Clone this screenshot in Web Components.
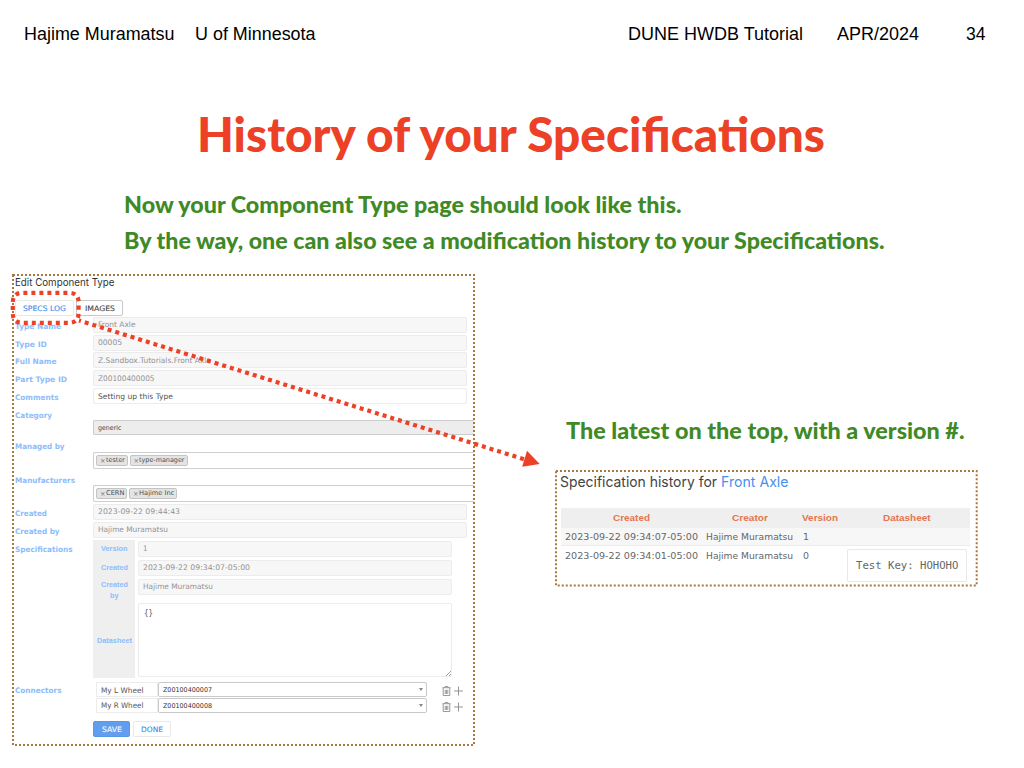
<!DOCTYPE html>
<html lang="en">
<head>
<meta charset="utf-8">
<title>History of your Specifications</title>
<style>
html,body{margin:0;width:1024px;height:768px;overflow:hidden;background:#fff}
</style>
</head>
<body>
<tutorial-slide></tutorial-slide>
<script>
const make = (host, html) => { host.attachShadow({mode:'open'}).innerHTML = html; };

/* One line of text set to a given measure. */
customElements.define('fit-text', class extends HTMLElement {
  connectedCallback() {
    if (this.shadowRoot) return;
    make(this, `<style>:host{display:block;flex:none;white-space:nowrap;line-height:1.2}
      span{display:inline-block;transform-origin:0 50%}</style><span><slot></slot></span>`);
    const w = parseFloat(this.getAttribute('w'));
    const s = this.shadowRoot.querySelector('span');
    const natural = s.getBoundingClientRect().width;
    this.style.width = w + 'px';
    if (natural) s.style.transform = `scaleX(${w / natural})`;
  }
});

customElements.define('dotted-frame', class extends HTMLElement {
  connectedCallback() {
    if (this.shadowRoot) return;
    make(this, `<style>:host{display:block;position:relative;box-sizing:border-box}
      svg{position:absolute;inset:0;width:100%;height:100%;overflow:visible;pointer-events:none}
      rect{fill:none;stroke:#aa7942;stroke-width:2;stroke-dasharray:2 2}</style>
      <slot></slot><svg><rect width="100%" height="100%"/></svg>`);
  }
});

customElements.define('slide-header', class extends HTMLElement {
  connectedCallback() {
    if (this.shadowRoot) return;
    make(this, `<style>:host{display:flex;height:68px;box-sizing:border-box;padding:24.4px 0 0 23.7px;font:17.5px "Liberation Sans",sans-serif;color:#000}
      .r{display:flex;margin:-.4px 0 0 313px}</style>
      <fit-text w="150.5">Hajime Muramatsu</fit-text><fit-text w="120.5" style="margin-left:20.5px">U of Minnesota</fit-text>
      <div class="r"><fit-text w="175">DUNE HWDB Tutorial</fit-text><fit-text w="82" style="margin-left:34px">APR/2024</fit-text><fit-text w="19.5" style="margin-left:46.8px">34</fit-text></div>`);
  }
});

/* Label on the left, control slotted on the right. */
customElements.define('form-row', class extends HTMLElement {
  connectedCallback() {
    if (this.shadowRoot) return;
    const h = this.getAttribute('h'), top = this.getAttribute('top') || 5;
    make(this, `<style>:host{display:grid;grid-template-columns:78.3px 1fr;height:${h}px}
      .l{padding-top:${top}px;font:bold 7.6px "DejaVu Sans",sans-serif;color:#8dbdfb}
      .c{padding-top:${this.getAttribute('ctop') || 0}px;min-width:0}</style>
      <div class="l"><fit-text w="${this.getAttribute('lw')}">${this.getAttribute('label')}</fit-text></div><div class="c"><slot></slot></div>`);
  }
});

customElements.define('text-field', class extends HTMLElement {
  connectedCallback() {
    if (this.shadowRoot) return;
    const on = this.hasAttribute('editable');
    make(this, `<style>:host{display:flex;align-items:center;box-sizing:border-box;width:${this.getAttribute('box') || 374}px;height:16px;border:1px solid #ececec;border-radius:2px;padding:0 0 0 4px;
      background:${on ? '#fff' : '#f7f7f7'};color:${on ? '#555' : '#929292'};font:7.6px "DejaVu Sans",sans-serif}</style>
      <fit-text w="${this.getAttribute('w')}"><slot></slot></fit-text>`);
  }
});

customElements.define('tag-select', class extends HTMLElement {
  connectedCallback() {
    if (this.shadowRoot) return;
    make(this, `<style>:host{display:flex;align-items:center;gap:2px;box-sizing:border-box;height:17px;border:1px solid #cfcfcf;border-right:0;border-radius:2px 0 0 2px;padding-left:2.2px}</style><slot></slot>`);
  }
});

customElements.define('tag-chip', class extends HTMLElement {
  connectedCallback() {
    if (this.shadowRoot) return;
    const b = parseFloat(this.getAttribute('box'));
    make(this, `<style>:host{display:flex;align-items:center;box-sizing:border-box;width:${b}px;height:11px;background:#e4e4e4;border:1px solid #c4c4c4;border-radius:2px;padding:1px 0 0 2.5px;gap:1.5px;font:6.6px "DejaVu Sans",sans-serif;color:#4c4c4c}
      i{font-style:normal;color:#777;width:4.5px;line-height:1}</style><i>×</i><fit-text w="${b - 12.5}"><slot></slot></fit-text>`);
  }
});

customElements.define('push-button', class extends HTMLElement {
  connectedCallback() {
    if (this.shadowRoot) return;
    make(this, `<style>:host{display:flex;align-items:center;justify-content:center;box-sizing:border-box;width:${this.getAttribute('box')}px;height:16px;border:1px solid #e9e9e9;border-radius:2px;font:7.5px "DejaVu Sans",sans-serif;color:#4188ec;-webkit-text-stroke:.1px;background:#fff}
      :host([kind=primary]){background:#639eee;border-color:#5a95e8;color:#fff}
      :host([kind=plain]){border-color:#c9c9c9;color:#444}</style><fit-text w="${this.getAttribute('w')}"><slot></slot></fit-text>`);
  }
});

customElements.define('spec-table', class extends HTMLElement {
  connectedCallback() {
    if (this.shadowRoot) return;
    make(this, `<style>:host{display:grid;grid-template-columns:41.7px 1fr;column-gap:3px;height:138.5px}
      .th{background:#efefef;font:bold 7.7px "Liberation Sans",sans-serif;color:#8dbdfb;display:flex;flex-direction:column;align-items:center}
      .td{padding-top:1px}text-field{margin-bottom:2.9px}
      .area{position:relative;box-sizing:border-box;width:314px;height:74px;border:1px solid #ececec;border-radius:2px;margin-top:8.4px;padding:5px 0 0 5.5px;font:8px "DejaVu Sans Mono",monospace;color:#555}
      svg{position:absolute;right:0;bottom:0}</style>
      <div class="th"><fit-text w="26.5" style="margin-top:4.6px">Version</fit-text><fit-text w="27" style="margin-top:9.4px">Created</fit-text>
      <fit-text w="27" style="margin-top:7.5px">Created</fit-text><fit-text w="8.5" style="margin-top:1.7px">by</fit-text><fit-text w="35" style="margin-top:36px">Datasheet</fit-text></div>
      <div class="td"><text-field box="314" w="4.5">1</text-field><text-field box="314" w="107">2023-09-22 09:34:07-05:00</text-field><text-field box="314" w="70">Hajime Muramatsu</text-field>
      <div class="area"><fit-text w="9">{}</fit-text><svg width="5" height="5" stroke="#888" stroke-width=".8"><path d="M0 5L5 0M3 5L5 3"/></svg></div></div>`);
  }
});

customElements.define('connector-row', class extends HTMLElement {
  connectedCallback() {
    if (this.shadowRoot) return;
    make(this, `<style>:host{display:flex;height:15.8px;padding-left:3px;font:7.7px "DejaVu Sans",sans-serif;color:#555;align-items:flex-start}
      .n,.s{display:flex;align-items:center;box-sizing:border-box;height:15.6px}
      .n{width:62px;border:1px solid #ececec;padding:1px 0 0 4px}
      .s{width:269px;height:15px;border:1px solid #c9c9c9;border-radius:2px;padding:1px 3px 0 4px;justify-content:space-between;font-size:6.7px;color:#333}
      .t{margin:4px 0 0 15px}.p{margin:4.3px 0 0 3px}</style>
      <div class="n"><fit-text w="42.5">${this.getAttribute('name')}</fit-text></div>
      <div class="s"><fit-text w="49">${this.getAttribute('part')}</fit-text><svg width="4" height="3"><path d="M0 0H4L2 3Z" fill="#888"/></svg></div>
      <svg class="t" width="9" height="10" viewBox="0 0 9 10" fill="none" stroke="#888" stroke-width=".85"><path d="M.3 1.7H8.7M2.7 1.7L3.1.5H5.9L6.3 1.7M1.2 2V9.5H7.8V2M3.2 3.8V8M4.5 3.8V8M5.8 3.8V8"/></svg>
      <svg class="p" width="9" height="10" viewBox="0 0 9 10" stroke="#888" stroke-width=".9"><path d="M0 5H9M4.5 .5V9.5"/></svg>`);
  }
});

customElements.define('component-editor', class extends HTMLElement {
  connectedCallback() {
    if (this.shadowRoot) return;
    make(this, `<style>:host{display:block;width:461px}
      dotted-frame{height:470px;padding-left:1.7px}
      h2{margin:0;height:25.3px;padding-top:1.5px;box-sizing:border-box;font:10.6px Inter,sans-serif;color:#333}
      .b{display:flex;gap:2px;height:16.5px}
      .cat{display:flex;align-items:center;box-sizing:border-box;height:15px;background:#ededed;border:1px solid #ccc;border-right:0;border-radius:2px 0 0 2px;padding-left:4px;font:6.7px "DejaVu Sans",sans-serif;color:#444}
      .f{display:flex;gap:2.5px;padding:7.2px 0 0 78.3px}</style>
      <dotted-frame><h2><fit-text w="99.5">Edit Component Type</fit-text></h2>
      <div class="b"><push-button box="59.5" w="43">SPECS LOG</push-button><push-button kind="plain" box="46.5" w="30">IMAGES</push-button></div>
      <form-row h="17.85" label="Type Name" lw="46"><text-field w="37.5">Front Axle</text-field></form-row>
      <form-row h="17.85" label="Type ID" lw="32"><text-field w="24">00005</text-field></form-row>
      <form-row h="17.85" label="Full Name" lw="41.5"><text-field w="113">Z.Sandbox.Tutorials.Front Axle</text-field></form-row>
      <form-row h="17.85" label="Part Type ID" lw="52"><text-field w="56.5">Z00100400005</text-field></form-row>
      <form-row h="17.85" label="Comments" lw="43.5"><text-field editable w="75">Setting up this Type</text-field></form-row>
      <form-row h="31" label="Category" lw="37" ctop="14.4"><div class="cat"><fit-text w="23.5">generic</fit-text></div></form-row>
      <form-row h="33.4" label="Managed by" lw="49.5" ctop="14.8"><tag-select><tag-chip box="31.5">tester</tag-chip><tag-chip box="58">type-manager</tag-chip></tag-select></form-row>
      <form-row h="33.4" label="Manufacturers" lw="60" top="5.6" ctop="14.8"><tag-select><tag-chip box="31">CERN</tag-chip><tag-chip box="48">Hajime Inc</tag-chip></tag-select></form-row>
      <form-row h="17.9" label="Created" lw="32"><text-field w="82">2023-09-22 09:44:43</text-field></form-row>
      <form-row h="18.2" label="Created by" lw="44.5"><text-field w="70">Hajime Muramatsu</text-field></form-row>
      <form-row h="142" label="Specifications" lw="57.5" top="5.2"><spec-table></spec-table></form-row>
      <form-row h="32" label="Connectors" lw="46.5" top="4.3"><connector-row name="My L Wheel" part="Z00100400007"></connector-row><connector-row name="My R Wheel" part="Z00100400008"></connector-row></form-row>
      <div class="f"><push-button kind="primary" box="37" w="20">SAVE</push-button><push-button box="38" w="22">DONE</push-button></div>
      </dotted-frame>`);
  }
});

customElements.define('spec-history', class extends HTMLElement {
  connectedCallback() {
    if (this.shadowRoot) return;
    make(this, `<style>:host{display:block;width:420.7px}
      dotted-frame{height:114.4px;padding:2px 6.5px 0 4.4px}
      h2{display:flex;margin:0 0 0 -.4px;height:35px;gap:3.5px;font:14.5px Inter,sans-serif;color:#444}
      a{color:#4a8fef}
      .g{display:grid;grid-template-columns:141px 96px 44px 1fr}
      .h{height:19.5px;background:#efefef;font:bold 9.8px "Liberation Sans",sans-serif;color:#e4754f;align-items:center;justify-items:center}
      .h :last-child{margin-left:2px}
      .r{height:18.7px;grid-auto-rows:18.7px;font:9.4px "DejaVu Sans",sans-serif;color:#666;align-items:center;padding-left:4.5px;grid-template-columns:141px 96.4px 44.5px 1fr}
      .o{background:#f7f7f7;border-bottom:1px solid #ececec;box-sizing:border-box}
      .k{align-self:start;display:flex;align-items:center;justify-content:center;box-sizing:border-box;width:120px;height:33px;margin:2.6px 0 0 .3px;border:1px solid #e8e8e8;border-radius:2px;background:#fff;font:10.4px "DejaVu Sans Mono",monospace}</style>
      <dotted-frame><h2><fit-text w="157">Specification history for</fit-text><a><fit-text w="67.5">Front Axle</fit-text></a></h2>
      <div class="g h"><fit-text w="37">Created</fit-text><fit-text w="36">Creator</fit-text><fit-text w="36">Version</fit-text><fit-text w="47.5">Datasheet</fit-text></div>
      <div class="g r o"><fit-text w="133">2023-09-22 09:34:07-05:00</fit-text><fit-text w="87">Hajime Muramatsu</fit-text><fit-text w="6">1</fit-text></div>
      <div class="g r"><fit-text w="133">2023-09-22 09:34:01-05:00</fit-text><fit-text w="87">Hajime Muramatsu</fit-text><fit-text w="6">0</fit-text><div class="k"><fit-text w="102.4">Test Key: HOHOHO</fit-text></div></div>
      </dotted-frame>`);
  }
});

/* Dotted ring round the log button, with an arrow to the history panel. */
customElements.define('callout-arrow', class extends HTMLElement {
  connectedCallback() {
    if (this.shadowRoot) return;
    make(this, `<style>:host{position:absolute;inset:0;pointer-events:none}</style>
      <svg width="1024" height="768" fill="none" stroke="#ec4127" stroke-width="4.2" stroke-dasharray="4 4">
      <path d="M78.6 307.8V313Q78.6 322.8 68.8 322.8H22.6Q12.8 322.8 12.8 313V302.6Q12.8 292.8 22.6 292.8H68.8Q78.6 292.8 78.6 302.6Z" stroke-dashoffset="2"/><path d="M79 320.5L525 459.5" stroke-dashoffset="2"/>
      <path d="M539.7 464L527 450.8L522.2 466.8Z" fill="#ec4127" stroke="none"/></svg>`);
  }
});

customElements.define('tutorial-slide', class extends HTMLElement {
  connectedCallback() {
    if (this.shadowRoot) return;
    make(this, `<style>:host{display:block;position:relative;width:1024px;height:768px;background:#fff;overflow:hidden}
      h1{margin:0;height:119px;box-sizing:border-box;padding:37px 0 0 197px;font:900 48px Lato,sans-serif;color:#ec4127}
      .g{font:900 23.5px Lato,sans-serif;color:#3f8a26}
      .copy{padding:2.6px 0 0 124px;height:88px;box-sizing:border-box;display:flex;flex-direction:column;gap:8px}
      main{display:flex;padding-left:13.3px;gap:82px}
      .side{padding-top:141px}.side .g{padding-left:9.3px;height:55px;box-sizing:border-box}</style>
      <slide-header></slide-header>
      <h1><fit-text w="628">History of your Specifications</fit-text></h1>
      <div class="g copy"><fit-text w="557.5">Now your Component Type page should look like this.</fit-text><fit-text w="760.5">By the way, one can also see a modification history to your Specifications.</fit-text></div>
      <main><component-editor></component-editor><div class="side"><div class="g"><fit-text w="398.5">The latest on the top, with a version #.</fit-text></div><spec-history></spec-history></div></main>
      <callout-arrow></callout-arrow>`);
  }
});
</script>
</body>
</html>
